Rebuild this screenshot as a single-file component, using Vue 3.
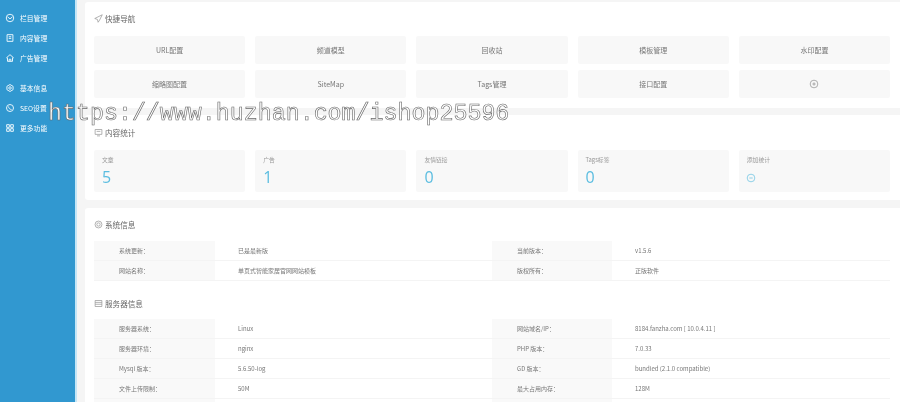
<script setup>
const menu = [
  [
    { name: '栏目管理', icon: 'M6 1.5a4.5 4.5 0 1 0 0 9 4.5 4.5 0 0 0 0-9z M3 4.6 6 7l3-2.4' },
    { name: '内容管理', icon: 'M2.5 2h7v8h-7z M4.5 4.5h3 M4.5 6.5h3' },
    { name: '广告管理', icon: 'M1.5 6 6 2l4.5 4 M3 5.5V10h6V5.5 M5 10V7.5h2V10' },
  ],
  [
    { name: '基本信息', icon: 'M6 1.8 9.7 4v4L6 10.2 2.3 8V4z M6 4.5a1.5 1.5 0 1 0 0 3 1.5 1.5 0 0 0 0-3z' },
    { name: 'SEO设置', icon: 'M6 1.8a4.2 4.2 0 1 0 0 8.4 4.2 4.2 0 0 0 0-8.4z M4.3 4.2c0 2 1.5 3.5 3.5 3.6' },
    { name: '更多功能', icon: 'M2 2h3.2v3.2H2z M6.8 2H10v3.2H6.8z M2 6.8h3.2V10H2z M6.8 6.8H10V10H6.8z' },
  ],
]

const navs = ['URL配置', '频道模型', '回收站', '模板管理', '水印配置', '缩略图配置', 'SiteMap', 'Tags管理', '接口配置']

const stats = [
  { label: '文章', value: 5 },
  { label: '广告', value: 1 },
  { label: '友情链接', value: 0 },
  { label: 'Tags标签', value: 0 },
]

const sysRows = [
  ['系统更新：', '已是最新版', '当前版本：', 'v1.5.6'],
  ['网站名称：', '单页式智能家居官网网站模板', '版权所有：', '正版软件'],
]

const serverRows = [
  ['服务器系统：', 'Linux', '网站域名/IP：', '8184.fanzha.com [ 10.0.4.11 ]'],
  ['服务器环境：', 'nginx', 'PHP 版本：', '7.0.33'],
  ['Mysql 版本：', '5.6.50-log', 'GD 版本：', 'bundled (2.1.0 compatible)'],
  ['文件上传限制：', '50M', '最大占用内存：', '128M'],
  ['', '', '', ''],
]
</script>

<template>
  <div class="page">
    <div class="shell">
      <aside class="side">
        <div v-for="(group, i) in menu" :key="i" class="group">
          <div v-for="item in group" :key="item.name" class="menu-item">
            <svg viewBox="0 0 12 12" class="menu-icon"><path :d="item.icon" /></svg>
            <span>{{ item.name }}</span>
          </div>
        </div>
      </aside>

      <main class="main">
        <section class="card card-nav">
          <h3 class="title">
            <svg viewBox="0 0 12 12" class="title-icon"><path d="M11 1 1 6l3.5 1.2L5.5 11 7.5 8 11 1z" /></svg>
            快捷导航
          </h3>
          <div class="grid nav-grid">
            <div v-for="n in navs" :key="n" class="tile">{{ n }}</div>
            <div class="tile">
              <svg viewBox="0 0 12 12" class="plus"><circle cx="6" cy="6" r="4.6" /><path d="M4 6h4M6 4v4" /></svg>
            </div>
          </div>
        </section>

        <section class="card card-stats">
          <h3 class="title">
            <svg viewBox="0 0 12 12" class="title-icon"><path d="M1.5 2h9v6.5h-9z M4 10.5h4 M3.5 4.5h5" /></svg>
            内容统计
          </h3>
          <div class="grid">
            <div v-for="s in stats" :key="s.label" class="stat">
              <div class="stat-label">{{ s.label }}</div>
              <div class="stat-value">{{ s.value }}</div>
            </div>
            <div class="stat">
              <div class="stat-label">添加统计</div>
              <svg viewBox="0 0 12 12" class="plus plus-blue"><circle cx="6" cy="6" r="4.6" /><path d="M4 6h4" /></svg>
            </div>
          </div>
        </section>

        <section class="card card-info">
          <h3 class="title title-sys">
            <svg viewBox="0 0 12 12" class="title-icon"><circle cx="6" cy="6" r="4.6" /><circle cx="6" cy="6" r="2.2" /></svg>
            系统信息
          </h3>
          <div class="table">
            <div v-for="(row, i) in sysRows" :key="i" class="row">
              <div class="cell label">{{ row[0] }}</div>
              <div class="cell value">{{ row[1] }}</div>
              <div class="cell label">{{ row[2] }}</div>
              <div class="cell value">{{ row[3] }}</div>
            </div>
          </div>

          <h3 class="title title-server">
            <svg viewBox="0 0 12 12" class="title-icon"><path d="M1.5 2h9v8h-9z M1.5 4.5h9 M1.5 7h9" /></svg>
            服务器信息
          </h3>
          <div class="table">
            <div v-for="(row, i) in serverRows" :key="i" class="row">
              <div class="cell label">{{ row[0] }}</div>
              <div class="cell value">{{ row[1] }}</div>
              <div class="cell label">{{ row[2] }}</div>
              <div class="cell value">{{ row[3] }}</div>
            </div>
          </div>
        </section>
      </main>
    </div>
  </div>
  <div class="watermark">https://www.huzhan.com/ishop25596</div>
</template>

<style scoped>
.page {
  width: 900px;
  height: 402px;
  overflow: hidden;
  filter: blur(0.5px);
  font-family: "Noto Sans CJK SC", "Noto Sans", sans-serif;
}

.shell {
  display: flex;
  height: 402px;
  background: #f5f5f5;
}

.side {
  width: 75px;
  flex: none;
  box-sizing: content-box;
  padding-top: 8px;
  background: #3198d0;
  border-right: 2px solid #c4e6f7;
  color: #fff;
}

.group + .group {
  margin-top: 10px;
}

.menu-item {
  display: flex;
  align-items: center;
  height: 20px;
  padding-left: 5px;
  gap: 5px;
  font-size: 6.8px;
}

.menu-icon {
  width: 10px;
  height: 10px;
  flex: none;
  fill: none;
  stroke: #e4f3fb;
  stroke-width: 1.2;
}

.main {
  flex: 1;
  min-width: 0;
  padding: 2px 0 0 8px;
}

.card {
  background: #fff;
  border-radius: 3px 0 0 3px;
  padding: 0 10px 0 9px;
  margin-bottom: 7px;
}

.card-nav {
  padding-bottom: 10px;
}

.card-stats {
  padding-bottom: 8px;
  margin-bottom: 8px;
}

.title {
  display: flex;
  align-items: center;
  gap: 2px;
  height: 34px;
  margin: 0;
  font-size: 7.6px;
  font-weight: 400;
  color: #666;
}

.card-nav .title {
  padding-bottom: 2px;
  box-sizing: border-box;
}

.card-stats .title {
  height: 35px;
}

.title-sys {
  height: 33px;
}

.title-server {
  height: 32px;
  margin-top: 6px;
}

.title-icon {
  width: 9px;
  height: 9px;
  flex: none;
  fill: none;
  stroke: #999;
  stroke-width: 1;
}

.grid {
  display: grid;
  grid-template-columns: repeat(5, 1fr);
  column-gap: 10px;
}

.nav-grid {
  row-gap: 6px;
}

.tile {
  display: flex;
  align-items: center;
  justify-content: center;
  height: 28px;
  border-radius: 2px;
  background: #f8f8f8;
  font-size: 7px;
  color: #777;
}

.plus {
  width: 10px;
  height: 10px;
  fill: none;
  stroke: #888;
  stroke-width: 0.8;
}

.plus-blue {
  display: block;
  margin: 9px 0 0 -1px;
  stroke: #5bbde0;
}

.stat {
  height: 42px;
  box-sizing: border-box;
  padding: 5px 8px 0;
  border-radius: 2px;
  background: #f8f8f8;
}

.stat-label {
  font-size: 5.8px;
  line-height: 9px;
  color: #999;
}

.stat-value {
  margin-top: 3px;
  font-family: "Open Sans", sans-serif;
  font-size: 16px;
  line-height: 20px;
  color: #5bbde0;
}

.row {
  display: grid;
  grid-template-columns: 121px 277px 120px 278px;
  height: 20px;
  box-sizing: border-box;
  border-bottom: 1px solid #f4f4f4;
}

.cell {
  display: flex;
  align-items: center;
  font-size: 6px;
  color: #777;
}

.label {
  padding-left: 25px;
  background: #f9f9f9;
}

.value {
  padding-left: 23px;
}

.watermark {
  position: absolute;
  left: 48px;
  top: 99px;
  font-family: "Liberation Mono", monospace;
  font-size: 23.3px;
  line-height: 30px;
  white-space: nowrap;
  color: #fff;
  opacity: 0.99;
  -webkit-text-stroke: 0.6px #666;
}
</style>
